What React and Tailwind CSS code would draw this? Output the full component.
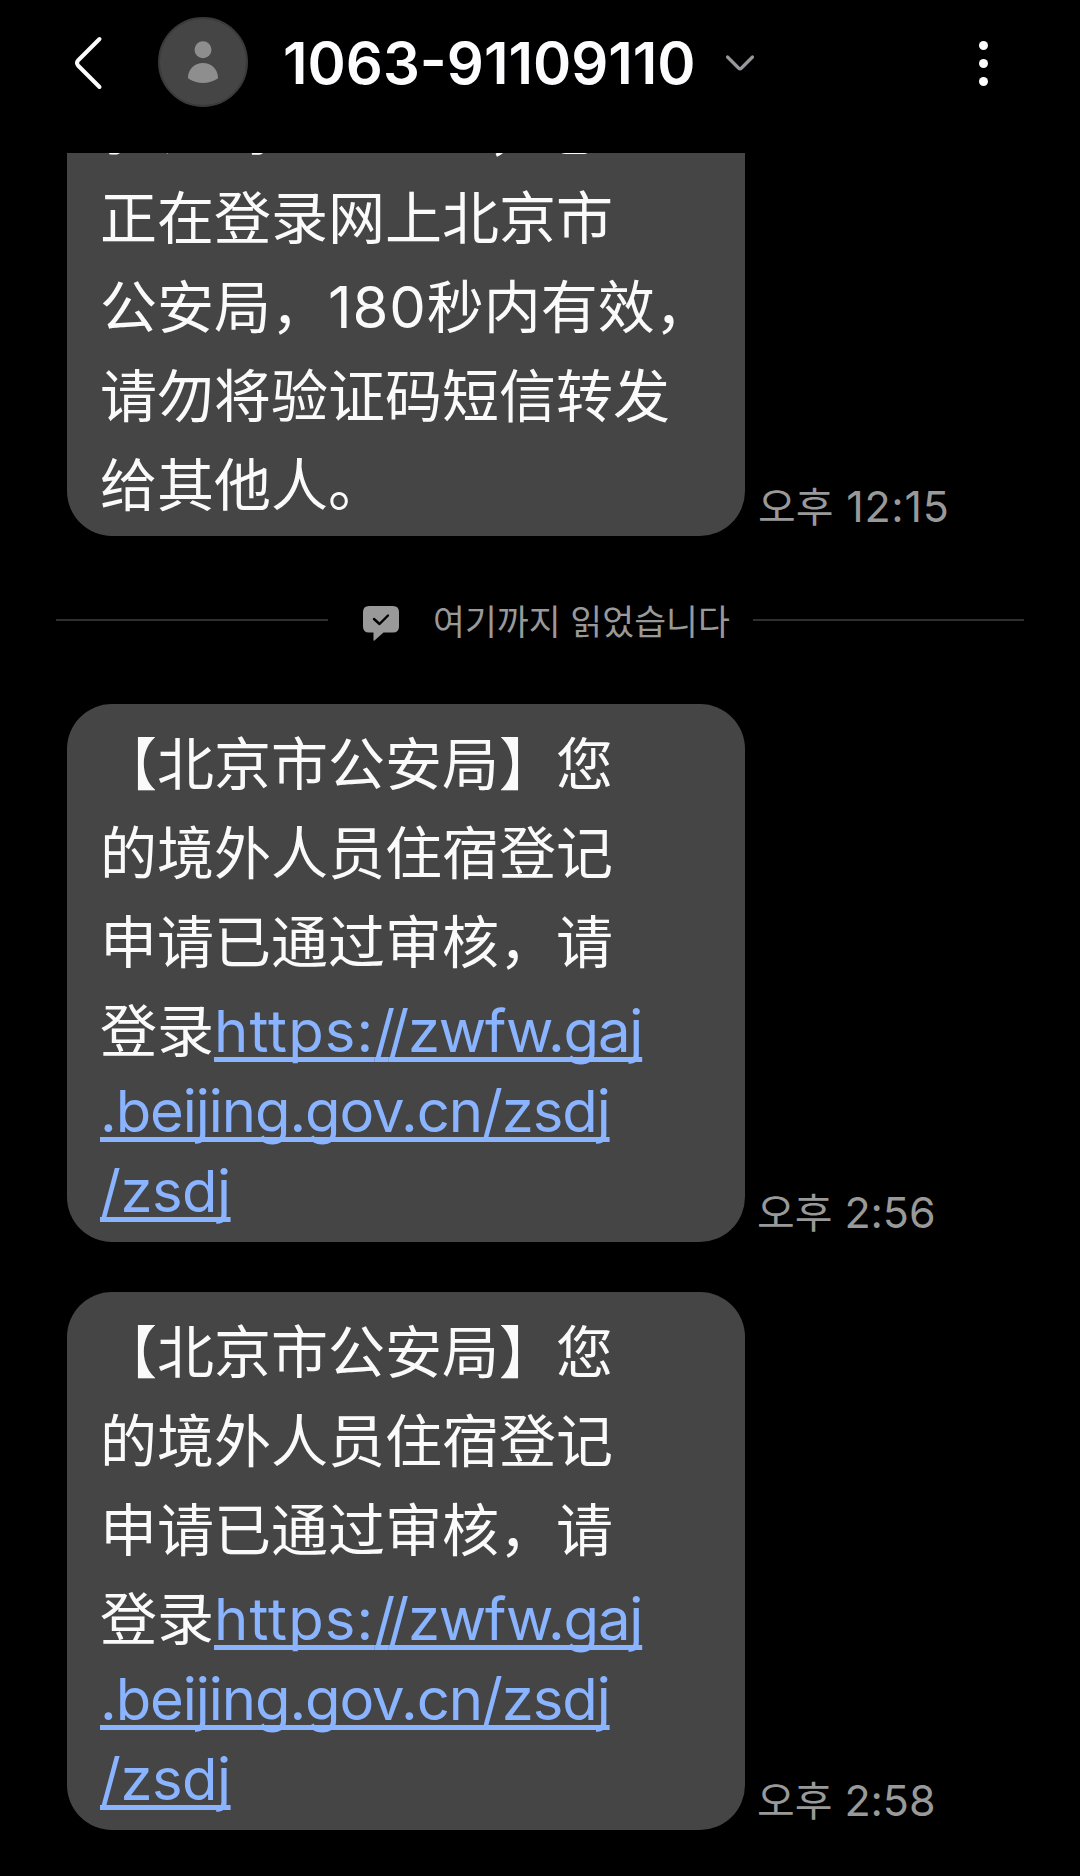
import React from 'react';

const linkClass =
  'text-[58px] text-[#8ab4ff] underline decoration-[5px] underline-offset-[5px] [text-decoration-skip-ink:none]';

const Header = () => (
  <header className="flex h-[153px] items-start bg-black">
    <button className="ml-[73px] mt-[35px]" aria-label="back">
      <svg width="30" height="56" viewBox="0 0 30 56" fill="none" stroke="#fcfcff" strokeWidth="4" strokeLinecap="round" strokeLinejoin="round">
        <path d="M26.500 4 L5 25.500 Q3 28 5 30.500 L26.500 52" />
      </svg>
    </button>
    <svg className="ml-[55px] mt-[17px]" width="90" height="90" viewBox="0 0 90 90">
      <circle cx="45" cy="45" r="44" fill="#454545" stroke="#3a3a3a" strokeWidth="2" />
      <circle cx="45" cy="32.700" r="8.500" fill="#8e8e8e" />
      <path d="M30 60.500 C30 52 37 46 45 46 C53 46 60 52 60 60.500 Q60 61.500 59 62 Q52 66 45 66 Q38 66 31 62 Q30 61.500 30 60.500 Z" fill="#8e8e8e" />
    </svg>
    <h1 className="ml-[35px] mt-[23px] w-[443px] whitespace-nowrap text-[58px] font-semibold leading-[80px] text-[#fcfcff]">
      1063-91109110
    </h1>
    <svg className="-ml-[2px] mt-[52px]" width="32" height="22" viewBox="0 0 32 22" fill="none" stroke="#98989c" strokeWidth="3.200" strokeLinecap="round" strokeLinejoin="round">
      <path d="M3.500 5 L14.500 16 Q16 17.400 17.500 16 L28.500 5" />
    </svg>
    <button className="ml-auto mr-[92px] mt-[41px] flex flex-col gap-[9px]" aria-label="more">
      <span className="size-[9px] rounded-full bg-[#fcfcff]" />
      <span className="size-[9px] rounded-full bg-[#fcfcff]" />
      <span className="size-[9px] rounded-full bg-[#fcfcff]" />
    </button>
  </header>
);

const Line = ({ children }) => (
  <p className="h-[89px] shrink-0 whitespace-nowrap leading-[89px]">{children}</p>
);

const Time = ({ children, className }) => (
  <span lang="ko" className={`whitespace-nowrap font-['Inter','Noto_Sans_CJK_KR',sans-serif] text-[43px] leading-[58px] text-[#999999] ${className}`}>
    <span className="text-[41px] tracking-normal">오후</span> {children}
  </span>
);

const ReadMarker = () => (
  <div className="mt-[49px] flex h-[70px] items-center pl-[56px] pr-[56px]">
    <div className="h-[2px] w-[272px] bg-[#303030]" />
    <svg className="ml-[35px] mt-[7px]" width="36" height="36" viewBox="0 0 36 36">
      <path d="M6 0 H30 Q36 0 36 6 V20.500 Q36 26.500 30 26.500 H20.500 L11.500 34.500 Q10.500 35.200 10.500 34 V26.500 H6 Q0 26.500 0 20.500 V6 Q0 0 6 0 Z" fill="#999999" />
      <path d="M11 13 L16.500 18 L25 9.500" fill="none" stroke="#000" strokeWidth="2.400" strokeLinecap="round" strokeLinejoin="round" />
    </svg>
    <span lang="ko" className="ml-[34px] w-[320px] whitespace-nowrap font-['Noto_Sans_CJK_KR',sans-serif] text-[34.700px] leading-[50px] text-[#999999]">
      여기까지 읽었습니다
    </span>
    <div className="h-[2px] flex-1 bg-[#303030]" />
  </div>
);

const RegistrationMessage = ({ time }) => (
  <div className="flex items-end pl-[67px]">
    <div className="h-[538px] w-[678px] rounded-[45px] bg-[#454545] pl-[33px] pt-[16px]">
      <Line>【北京市公安局】您</Line>
      <Line>的境外人员住宿登记</Line>
      <Line>申请已通过审核，请</Line>
      <Line>
        登录
        <a className={`${linkClass} tracking-[-1.2px]`}>
          <span className="tracking-[1.1px]">https:</span>
          <span className="tracking-[-7px]">/</span>/zwfw.gaj
        </a>
      </Line>
      <p className="h-[80px] whitespace-nowrap leading-[70px]">
        <a className={`${linkClass} tracking-[-1.08px]`}>.beijing.gov.cn/zsdj</a>
      </p>
      <p className="h-[80px] whitespace-nowrap leading-[70px]">
        <a className={`${linkClass} tracking-[-0.5px]`}>/zsdj</a>
      </p>
    </div>
    <Time className="ml-[12px] tracking-[-0.1px]">{time}</Time>
  </div>
);

const App = () => {
  return (
    <div lang="zh-CN" className="h-[1876px] w-[1080px] overflow-hidden bg-black font-['Inter','Noto_Sans_CJK_SC',sans-serif] text-[57px] text-[#fafafa]">
      <Header />
      <main>
        {/* older message, scrolled partly under the header */}
        <div className="flex h-[383px] items-end pl-[67px]">
          <div className="flex h-[383px] w-[678px] flex-col justify-end overflow-hidden rounded-b-[45px] bg-[#454545] pb-[6px] pl-[33px]">
            <Line>验证码<span className="inline-block w-[217px]">180562</span>，您</Line>
            <Line>正在登录网上北京市</Line>
            <Line>公安局，<span className="text-[58px] tracking-[0.9px]">180</span>秒内有效，</Line>
            <Line>请勿将验证码短信转发</Line>
            <Line>给其他人。</Line>
          </div>
          <Time className="ml-[13px] tracking-[0.7px]">12:15</Time>
        </div>
        <ReadMarker />
        <div className="mt-[49px] flex flex-col gap-[50px]">
          <RegistrationMessage time="2:56" />
          <RegistrationMessage time="2:58" />
        </div>
      </main>
    </div>
  );
};

export default App;
